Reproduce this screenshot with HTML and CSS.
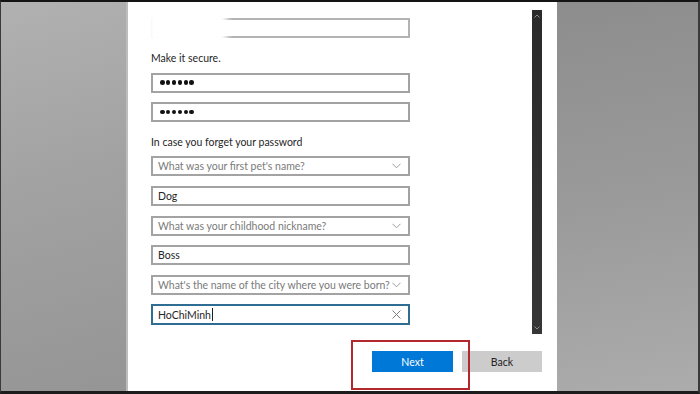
FILE: index.html
```html
<!DOCTYPE html>
<html lang="en">
<head>
  <meta charset="UTF-8" />
  <meta name="viewport" content="width=device-width, initial-scale=1" />
  <title>Create account - security questions</title>
  <link rel="stylesheet" href="styles.css">
</head>
<body>
  <div class="screen">
    <div class="side side-left"></div>

    <section class="panel" aria-label="Create password">
      <div class="panel-body">
        <form class="form" onsubmit="return false">
          <div class="field field-hidden"><span class="smudge"></span></div>

          <p class="label label-first">Make it secure.</p>
          <div class="field"><span class="dots"><i></i><i></i><i></i><i></i><i></i><i></i></span></div>
          <div class="field"><span class="dots"><i></i><i></i><i></i><i></i><i></i><i></i></span></div>

          <p class="label">In case you forget your password</p>
          <div class="field select">
            <span class="placeholder">What was your first pet's name?</span>
            <svg class="chevron" width="9" height="6" viewBox="0 0 9 6"><polyline points="0.5,0.8 4.5,4.8 8.5,0.8" /></svg>
          </div>
          <div class="field"><span class="value">Dog</span></div>
          <div class="field select">
            <span class="placeholder">What was your childhood nickname?</span>
            <svg class="chevron" width="9" height="6" viewBox="0 0 9 6"><polyline points="0.5,0.8 4.5,4.8 8.5,0.8" /></svg>
          </div>
          <div class="field"><span class="value">Boss</span></div>
          <div class="field select">
            <span class="placeholder">What's the name of the city where you were born?</span>
            <svg class="chevron" width="9" height="6" viewBox="0 0 9 6"><polyline points="0.5,0.8 4.5,4.8 8.5,0.8" /></svg>
          </div>
          <div class="field field-focus">
            <span class="value">HoChiMinh<span class="caret"></span></span>
            <svg class="clear" width="9" height="9" viewBox="0 0 9 9"><path d="M0.5 0.5 L8.5 8.5 M8.5 0.5 L0.5 8.5" /></svg>
          </div>
        </form>

        <div class="scrollbar">
          <svg class="arrow" width="6" height="4" viewBox="0 0 6 4"><polyline points="0.5,3.5 3,1 5.5,3.5" /></svg>
          <svg class="arrow" width="6" height="4" viewBox="0 0 6 4"><polyline points="0.5,0.5 3,3 5.5,0.5" /></svg>
        </div>
      </div>

      <div class="actions">
        <span class="highlight-wrap">
          <button class="btn btn-primary" type="button">Next</button>
          <span class="highlight"></span>
        </span>
        <button class="btn btn-secondary" type="button">Back</button>
      </div>
    </section>

    <div class="side side-right"></div>
  </div>
</body>
</html>
```

FILE: styles.css
```css
:root {
  --field-border: #a3a3a3;
  --text: #262626;
  --placeholder: #7a7a7a;
  --accent: #0078d7;
  --font: 'Lato', 'Open Sans', sans-serif;
}

*, *::before, *::after {
  box-sizing: border-box;
}

body {
  margin: 0;
  font-family: var(--font);
  background: #1a1a1a;
}

/* Frame */
.screen {
  width: 700px;
  height: 394px;
  display: flex;
  border-top: 2px solid #141414;
  border-bottom: 3px solid #1c1c1c;
  border-left: 1px solid #3a3a3a;
  border-right: 2px solid #3a3a3a;
  overflow: hidden;
}

.side {
  height: 100%;
}

.side-left {
  width: 127px;
  background: linear-gradient(165deg, #b1b1b1 0%, #a2a2a2 45%, #959595 100%);
  border-right: 2px solid #bdbdbd;
}

.side-right {
  flex: 1;
  background: linear-gradient(170deg, #8d8d8d 0%, #9a9a9a 50%, #acacac 100%);
}

/* Dialog panel */
.panel {
  width: 429px;
  height: 100%;
  background: #ffffff;
  display: flex;
  flex-direction: column;
}

.panel-body {
  display: flex;
  justify-content: space-between;
  padding: 0 15px 0 23px;
}

.form {
  width: 259px;
  margin: 16px 0 0 0;
  display: flex;
  flex-direction: column;
  gap: 9.6px;
}

.label {
  margin: 3px 0 -2px 0;
  height: 14px;
  line-height: 14px;
  font-size: 10.5px;
  color: var(--text);
}

.label-first {
  margin-top: 3.4px;
}

.field {
  position: relative;
  height: 20px;
  border: 2px solid var(--field-border);
  display: flex;
  align-items: center;
  justify-content: space-between;
  padding: 0 7px 0 5px;
  font-size: 10.5px;
  background: #fff;
}

.field-hidden {
  border-color: #b3b3b3;
}

.smudge {
  position: absolute;
  left: -6px;
  top: -10px;
  width: 80px;
  height: 34px;
  background: #ffffff;
  filter: blur(3px);
}

.field-focus {
  height: 21px;
  border-color: #2f6d92;
}

.value {
  color: var(--text);
  display: flex;
  align-items: center;
}

.placeholder {
  color: var(--placeholder);
}

.caret {
  display: inline-block;
  width: 1px;
  height: 13px;
  margin-left: 1px;
  background: #222;
}

.dots {
  display: flex;
  gap: 1.3px;
  padding-left: 2px;
}

.dots i {
  width: 4.6px;
  height: 4.6px;
  border-radius: 50%;
  background: #111;
}

.chevron polyline {
  fill: none;
  stroke: #9a9a9a;
  stroke-width: 1;
}

.clear path {
  fill: none;
  stroke: #7d7d7d;
  stroke-width: 1;
}

/* Scrollbar */
.scrollbar {
  width: 10px;
  height: 324px;
  margin-top: 8px;
  background: linear-gradient(#2a2a2a, #363636);
  display: flex;
  flex-direction: column;
  justify-content: space-between;
  align-items: center;
  padding: 4px 0 4px 0;
}

.arrow polyline {
  fill: none;
  stroke: #8a8a8a;
  stroke-width: 1;
}

/* Buttons */
.actions {
  display: flex;
  justify-content: flex-end;
  gap: 9px;
  margin-top: 17px;
  padding-right: 15px;
}

.highlight-wrap {
  position: relative;
  display: flex;
}

.btn {
  height: 21px;
  border: none;
  padding: 0;
  font-family: var(--font);
  font-size: 10.5px;
  cursor: pointer;
}

.btn-primary {
  width: 81px;
  background: var(--accent);
  color: #ffffff;
}

.btn-secondary {
  width: 80px;
  background: #cccccc;
  color: #222222;
}

.highlight {
  position: absolute;
  top: -11px;
  left: -21px;
  right: -17px;
  bottom: -18px;
  border: 2px solid #b3282d;
  pointer-events: none;
}
```
